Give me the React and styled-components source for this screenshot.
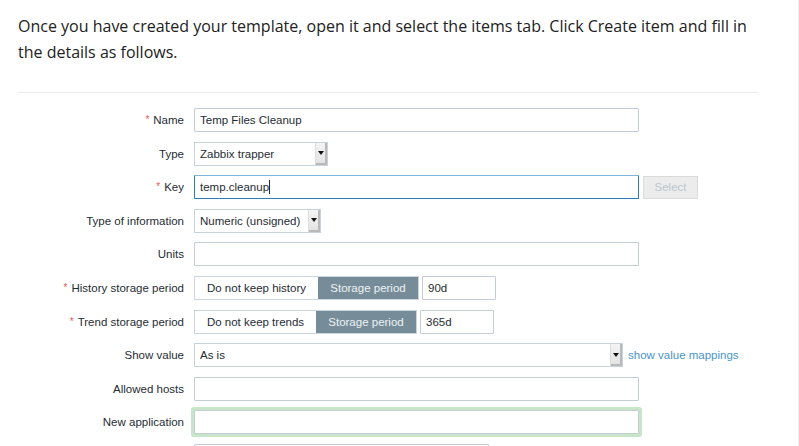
import React from 'react';
import styled, { createGlobalStyle } from 'styled-components';

const GlobalStyle = createGlobalStyle`
    html, body {
        margin: 0;
        padding: 0;
        background: #fff;
    }
`;

const Page = styled.div`
    box-sizing: border-box;
    width: 799px;
    height: 446px;
    overflow: hidden;
    padding: 13px 0 0 18px;
    border-right: 1px solid #f0f0f0;
`;

const Intro = styled.p`
    margin: 0;
    width: 740px;
    font-family: 'Open Sans', 'Noto Sans', sans-serif;
    font-size: 16px;
    line-height: 26px;
    color: #222;
`;

const Rule = styled.hr`
    width: 740px;
    margin: 27px 0 15px;
    border: 0;
    border-top: 1px solid #ececec;
`;

const Form = styled.div`
    display: grid;
    grid-template-columns: 166px 1fr;
    column-gap: 10px;
    row-gap: 9.6px;
    font-family: Arial, 'Liberation Sans', sans-serif;
    font-size: 11.5px;
    color: #1f2c33;
`;

const Label = styled.label`
    display: flex;
    align-items: center;
    justify-content: flex-end;
    height: 24px;
    white-space: nowrap;
    &::before {
        content: ${(p) => (p.required ? "'*'" : 'none')};
        color: #e45959;
        font-size: 10px;
        margin-right: 4px;
        margin-top: -1px;
    }
`;

const Field = styled.div`
    display: flex;
    align-items: center;
    gap: ${(p) => p.gap || 4}px;
    height: ${(p) => p.h || 24}px;
`;

const TextBox = styled.div`
    box-sizing: border-box;
    width: ${(p) => p.w}px;
    height: ${(p) => p.h || 24}px;
    display: flex;
    align-items: ${(p) => (p.h ? 'flex-start' : 'center')};
    padding: 0 5px;
    background: #fff;
    border: 1px solid ${(p) => (p.focus ? '#2a7dbd' : '#c3cdd3')};
    border-top-color: ${(p) => (p.focus ? '#82b5d9' : '#c3cdd3')};
    box-shadow: ${(p) => (p.glow ? '0 0 0 3px #c8e5ca' : 'none')};
    border-radius: 1px;
    white-space: nowrap;
`;

const Caret = styled.span`
    display: inline-block;
    width: 1px;
    height: 14px;
    background: #1f2c33;
`;

const Select = styled.div`
    box-sizing: border-box;
    width: ${(p) => p.w}px;
    height: 24px;
    display: flex;
    align-items: center;
    justify-content: space-between;
    padding-left: 5px;
    background: #fff;
    border: 1px solid #c9d2d8;
    white-space: nowrap;
`;

const Arrow = styled.span`
    box-sizing: border-box;
    width: 12px;
    height: 22px;
    display: flex;
    align-items: center;
    justify-content: center;
    background: linear-gradient(#f4f4f4, #e2e2e2);
    border-left: 1px solid #dcdcdc;
    box-shadow: inset -2px -2px 0 #b9b9b9;
    &::after {
        content: '';
        border-left: 3px solid transparent;
        border-right: 3px solid transparent;
        border-top: 4px solid #111;
        margin: -1px 1px 0 0;
    }
`;

const GhostButton = styled.button`
    box-sizing: border-box;
    width: 55px;
    height: 23px;
    background: #ececec;
    border: 1px solid #dadada;
    color: #bcc6cc;
    font-family: inherit;
    font-size: 11.5px;
    padding: 0;
`;

const Segments = styled.div`
    display: flex;
    height: 24px;
    border: 1px solid #cbd5db;
    box-sizing: border-box;
`;

const Segment = styled.span`
    display: flex;
    align-items: center;
    justify-content: center;
    width: ${(p) => p.w}px;
    background: ${(p) => (p.active ? '#768d99' : '#fff')};
    color: ${(p) => (p.active ? '#eef2f4' : '#1f2c33')};
    white-space: nowrap;
`;

const Link = styled.a`
    color: #4796c4;
    text-decoration: none;
    white-space: nowrap;
`;

function SelectBox({ w, value }) {
    return (
        <Select w={w}>
            {value}
            <Arrow />
        </Select>
    );
}

function StorageRow({ label, off, offW, onW, value, valueW }) {
    return (
        <>
            <Label required>{label}</Label>
            <Field gap={3}>
                <Segments>
                    <Segment w={offW}>{off}</Segment>
                    <Segment w={onW} active>Storage period</Segment>
                </Segments>
                <TextBox w={valueW}>{value}</TextBox>
            </Field>
        </>
    );
}

export default function App() {
    return (
        <Page>
            <GlobalStyle />
            <Intro>
                Once you have created your template, open it and select the items tab. Click Create item and fill in
                the details as follows.
            </Intro>
            <Rule />
            <Form>
                <Label required>Name</Label>
                <Field>
                    <TextBox w={445}>Temp Files Cleanup</TextBox>
                </Field>

                <Label>Type</Label>
                <Field>
                    <SelectBox w={134} value="Zabbix trapper" />
                </Field>

                <Label required>Key</Label>
                <Field>
                    <TextBox w={445} focus>
                        temp.cleanup
                        <Caret />
                    </TextBox>
                    <GhostButton type="button">Select</GhostButton>
                </Field>

                <Label>Type of information</Label>
                <Field>
                    <SelectBox w={127} value="Numeric (unsigned)" />
                </Field>

                <Label>Units</Label>
                <Field>
                    <TextBox w={445} />
                </Field>

                <StorageRow label="History storage period" off="Do not keep history" offW={123} onW={100} value="90d" valueW={74} />
                <StorageRow label="Trend storage period" off="Do not keep trends" offW={121} onW={100} value="365d" valueW={74} />

                <Label>Show value</Label>
                <Field gap={5}>
                    <SelectBox w={429} value="As is" />
                    <Link href="#">show value mappings</Link>
                </Field>

                <Label>Allowed hosts</Label>
                <Field>
                    <TextBox w={445} />
                </Field>

                <Label>New application</Label>
                <Field>
                    <TextBox w={445} glow />
                </Field>

                <Label />
                <Field h={80}>
                    <TextBox w={295} h={80} />
                </Field>
            </Form>
        </Page>
    );
}
